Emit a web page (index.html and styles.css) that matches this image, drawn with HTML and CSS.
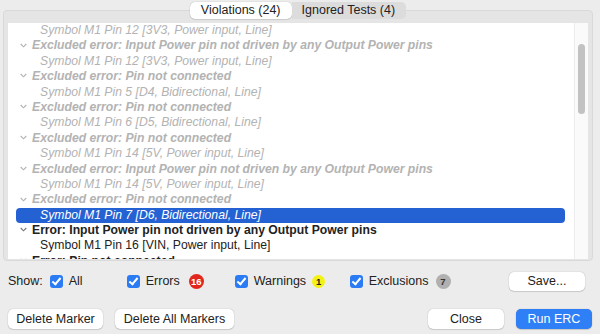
FILE: index.html
```html
<!DOCTYPE html>
<html lang="en">

<head>
    <meta charset="UTF-8">
    <title>Electrical Rules Checker</title>
    <link rel="stylesheet" href="styles.css">
</head>

<body>
    <main class="dialog">
        <section class="panel">
            <nav class="tabs">
                <a class="tab active">Violations (24)</a>
                <a class="tab">Ignored Tests (4)</a>
            </nav>
            <div class="listbox">
                <div class="list">
                    <div class="row child excluded">Symbol M1 Pin 12 [3V3, Power input, Line]</div>
                    <div class="row parent excluded"><svg class="chev" viewBox="0 0 8 5"><polyline points="0.8,0.8 4,4 7.2,0.8" /></svg>Excluded error: Input Power pin not driven by any Output Power pins</div>
                    <div class="row child excluded">Symbol M1 Pin 12 [3V3, Power input, Line]</div>
                    <div class="row parent excluded"><svg class="chev" viewBox="0 0 8 5"><polyline points="0.8,0.8 4,4 7.2,0.8" /></svg>Excluded error: Pin not connected</div>
                    <div class="row child excluded">Symbol M1 Pin 5 [D4, Bidirectional, Line]</div>
                    <div class="row parent excluded"><svg class="chev" viewBox="0 0 8 5"><polyline points="0.8,0.8 4,4 7.2,0.8" /></svg>Excluded error: Pin not connected</div>
                    <div class="row child excluded">Symbol M1 Pin 6 [D5, Bidirectional, Line]</div>
                    <div class="row parent excluded"><svg class="chev" viewBox="0 0 8 5"><polyline points="0.8,0.8 4,4 7.2,0.8" /></svg>Excluded error: Pin not connected</div>
                    <div class="row child excluded">Symbol M1 Pin 14 [5V, Power input, Line]</div>
                    <div class="row parent excluded"><svg class="chev" viewBox="0 0 8 5"><polyline points="0.8,0.8 4,4 7.2,0.8" /></svg>Excluded error: Input Power pin not driven by any Output Power pins</div>
                    <div class="row child excluded">Symbol M1 Pin 14 [5V, Power input, Line]</div>
                    <div class="row parent excluded"><svg class="chev" viewBox="0 0 8 5"><polyline points="0.8,0.8 4,4 7.2,0.8" /></svg>Excluded error: Pin not connected</div>
                    <div class="row child excluded selected">Symbol M1 Pin 7 [D6, Bidirectional, Line]</div>
                    <div class="row parent"><svg class="chev" viewBox="0 0 8 5"><polyline points="0.8,0.8 4,4 7.2,0.8" /></svg>Error: Input Power pin not driven by any Output Power pins</div>
                    <div class="row child">Symbol M1 Pin 16 [VIN, Power input, Line]</div>
                    <div class="row parent"><svg class="chev" viewBox="0 0 8 5"><polyline points="0.8,0.8 4,4 7.2,0.8" /></svg>Error: Pin not connected</div>
                </div>
                <div class="scrollbar">
                    <div class="thumb"></div>
                </div>
            </div>
        </section>

        <section class="filters">
            <span class="label">Show:</span>
            <label class="check all"><span class="box"></span>All</label>
            <label class="check errors"><span class="box"></span>Errors<span class="badge red">16</span></label>
            <label class="check warnings"><span class="box"></span>Warnings<span class="badge yellow">1</span></label>
            <label class="check exclusions"><span class="box"></span>Exclusions<span class="badge grey">7</span></label>
            <button class="btn save">Save...</button>
        </section>

        <section class="actions">
            <button class="btn delete">Delete Marker</button>
            <button class="btn delete-all">Delete All Markers</button>
            <span class="spacer"></span>
            <button class="btn close">Close</button>
            <button class="btn primary">Run ERC</button>
        </section>
    </main>
</body>

</html>
```

FILE: styles.css
```css
body {
    margin: 0;
    background-color: #ececec;
    font-family: "Liberation Sans", Arial, sans-serif;
    font-size: 12.5px;
    color: #222;
}

.dialog {
    width: 600px;
    height: 334px;
    overflow: hidden;
}

.panel {
    margin: 10px 7px 0 3px;
    height: 251px;
    padding: 0 4px 0 4px;
    background-color: #e5e5e5;
    border: 1px solid #d9d9d9;
    border-radius: 4px;
    box-sizing: border-box;
}

.tabs {
    display: flex;
    justify-content: center;
    margin: -9px 0 4px 0;
}

.tabs .tab {
    display: block;
    padding: 0 12px;
    height: 17px;
    line-height: 17px;
    background-color: #dcdcdc;
    color: #222;
}

.tabs .tab:first-child {
    border-radius: 5px 0 0 5px;
}

.tabs .tab:last-child {
    border-radius: 0 5px 5px 0;
    padding: 0 11px 0 10px;
}

.tabs .tab.active {
    background-color: #fff;
    border-radius: 5px;
    box-shadow: 0 0 1px rgba(0, 0, 0, 0.35), 0 1px 1px rgba(0, 0, 0, 0.08);
    padding: 0 11px;
}

.listbox {
    display: flex;
    height: 236px;
    background-color: #fff;
    overflow: hidden;
}

.list {
    flex: 1;
    padding: 0 9px 0 8px;
}

.row {
    height: 15.4px;
    line-height: 15.4px;
    white-space: nowrap;
    font-size: 12.2px;
}

.row.child {
    padding-left: 24px;
}

.row.parent {
    padding-left: 4px;
    font-weight: bold;
}

.row.excluded {
    font-style: italic;
    color: #b3b3b3;
}

.row.selected {
    background-color: #2462d4;
    color: #fff;
    border-radius: 4px;
}

.chev {
    width: 7px;
    height: 5px;
    margin: 0 5px 2px 0;
    vertical-align: middle;
    fill: none;
    stroke: currentColor;
    stroke-width: 1.3;
}

.row.parent:not(.excluded) .chev {
    stroke: #777;
}

.scrollbar {
    width: 14px;
    background-color: #fafafa;
    border-left: 1px solid #ededed;
    padding: 21px 0 0 3px;
    box-sizing: border-box;
}

.thumb {
    width: 7px;
    height: 70px;
    background-color: #c2c2c2;
    border-radius: 4px;
}

.filters {
    display: flex;
    align-items: center;
    height: 20px;
    margin-top: 10px;
    padding: 0 15px 0 8px;
}

.label {
    margin-right: 7px;
}

.check {
    display: flex;
    align-items: center;
}

.check .box {
    width: 13px;
    height: 13px;
    border-radius: 3px;
    margin-right: 6px;
    background-color: #2b7bf5;
    position: relative;
}

.check .box::after {
    content: "";
    position: absolute;
    left: 4px;
    top: 1px;
    width: 3px;
    height: 7px;
    border: solid #fff;
    border-width: 0 2px 2px 0;
    transform: rotate(40deg);
}

.all {
    width: 77px;
}

.errors {
    width: 108px;
}

.warnings {
    width: 115px;
}

.exclusions {
    flex: 1;
}

.badge {
    display: inline-block;
    min-width: 15px;
    height: 15px;
    border-radius: 8px;
    margin-left: 9px;
    font-size: 9.5px;
    font-weight: bold;
    line-height: 15px;
    text-align: center;
}

.badge.red {
    background-color: #e2261e;
    color: #fff;
}

.badge.yellow {
    background-color: #f4f213;
    color: #222;
    min-width: 13px;
    height: 13px;
    line-height: 13px;
    margin-left: 6px;
}

.badge.grey {
    background-color: #b0b0b0;
    color: #333;
    margin-left: 7px;
}

.btn {
    font-family: inherit;
    font-size: 12.5px;
    color: #222;
    background-color: #fff;
    border: none;
    border-radius: 5px;
    height: 19px;
    padding: 0;
    white-space: nowrap;
    box-shadow: 0 0 1px rgba(0, 0, 0, 0.35), 0 1px 1px rgba(0, 0, 0, 0.12);
}

.save {
    width: 76px;
}

.actions {
    display: flex;
    align-items: center;
    gap: 12px;
    margin-top: 18px;
    padding: 0 8px;
}

.actions .btn {
    height: 20px;
}

.delete {
    width: 95px;
}

.delete-all {
    width: 119px;
}

.spacer {
    flex: 1;
}

.close {
    width: 76px;
}

.primary {
    width: 76px;
    background-color: #2f7ff6;
    color: #fff;
}
```
